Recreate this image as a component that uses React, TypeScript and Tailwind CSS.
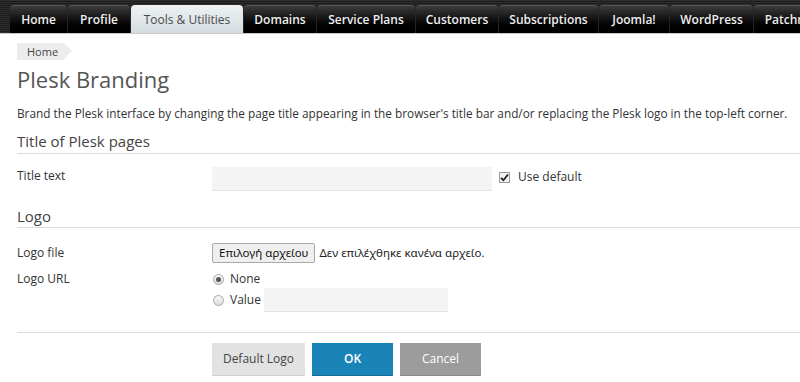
import React from "react"

const tabs = [
  { label: "Home", w: "w-[57px]" },
  { label: "Profile", w: "w-[62px]" },
  { label: "Tools & Utilities", w: "w-[112px]", active: true },
  { label: "Domains", w: "w-[72px]" },
  { label: "Service Plans", w: "w-[98px]" },
  { label: "Customers", w: "w-[82px]" },
  { label: "Subscriptions", w: "w-[99px]" },
  { label: "Joomla!", w: "w-[70px]" },
  { label: "WordPress", w: "w-[83px]" },
  { label: "Patchman", w: "w-[80px]" },
]

function TabBar() {
  return (
    <div className="h-[34px] bg-[repeating-linear-gradient(180deg,#2e2e2e_0px,#2e2e2e_1px,#1c1c1c_1px,#1c1c1c_2px)] border-b border-[#c8c8c8] pl-[10px] pt-[5px] flex gap-px overflow-hidden">
      {tabs.map((t) =>
        t.active ? (
          <div
            key={t.label}
            className={`${t.w} shrink-0 h-[29px] rounded-t-[4px] bg-gradient-to-b from-[#eef2f4] to-[#d3dbdf] flex items-center justify-center text-[12px] text-[#4a4a4a]`}
          >
            {t.label}
          </div>
        ) : (
          <div
            key={t.label}
            className={`${t.w} shrink-0 h-[28px] rounded-t-[4px] bg-gradient-to-b from-[#3c3c3c] via-[#111] to-[#000] border-t border-[#555] flex items-center justify-center text-[12px] font-semibold text-[#f0f0f0] [text-shadow:0_1px_1px_#000]`}
          >
            {t.label}
          </div>
        )
      )}
    </div>
  )
}

function Radio({ checked }: { checked?: boolean }) {
  return (
    <span className="w-[11px] h-[11px] rounded-full border border-[#a8a8a8] bg-gradient-to-b from-[#fafafa] to-[#dcdcdc] flex items-center justify-center shrink-0">
      {checked && <span className="w-[5px] h-[5px] rounded-full bg-[#555]" />}
    </span>
  )
}

export default function App() {
  return (
    <div className="w-[800px] h-[382px] bg-white overflow-hidden [font-family:'Open_Sans',sans-serif]">
      <TabBar />

      <div className="pl-[17px]">
        {/* Breadcrumb */}
        <div className="mt-[9px] flex">
          <div className="relative h-[17px] bg-[#ececec] pl-[10px] pr-[6px] text-[11px] leading-[17px] text-[#444]">
            Home
            <span className="absolute right-[-8px] top-0 w-0 h-0 border-y-[8.5px] border-y-transparent border-l-[8px] border-l-[#ececec]" />
          </div>
        </div>

        <h1 className="mt-[5px] text-[22px] leading-[28px] text-[#555] font-normal">Plesk Branding</h1>

        <p className="mt-[12px] text-[11.8px] leading-[16px] text-[#333] whitespace-nowrap">
          Brand the Plesk interface by changing the page title appearing in the browser's title bar and/or replacing the Plesk logo in the top-left corner.
        </p>

        {/* Title section */}
        <div className="mt-[10px] border-b border-[#dcdcdc] pb-[2px] text-[15px] leading-[20px] text-[#444]">
          Title of Plesk pages
        </div>

        <div className="mt-[13px] flex">
          <div className="w-[195px] shrink-0 pt-[1px] text-[12px] leading-[16px] text-[#333]">Title text</div>
          <div className="flex items-center">
            <div className="w-[280px] h-[24px] bg-[#f4f4f4] border-b border-[#e4e4e4]" />
            <span className="ml-[7px] -mt-[4px] w-[11px] h-[11px] border border-[#9a9a9a] bg-[#f2f2f2] flex items-center justify-center">
              <svg width="9" height="9" viewBox="0 0 9 9">
                <path d="M1 4.8 L3.4 7.2 L8 1.5" stroke="#222" strokeWidth="1.8" fill="none" />
              </svg>
            </span>
            <span className="ml-[8px] -mt-[4px] text-[12px] text-[#333]">Use default</span>
          </div>
        </div>

        {/* Logo section */}
        <div className="mt-[15px] border-b border-[#dcdcdc] pb-[1px] text-[15px] leading-[20px] text-[#444]">
          Logo
        </div>

        <div className="mt-[15px] flex items-center">
          <div className="w-[195px] shrink-0 text-[12px] leading-[16px] text-[#333]">Logo file</div>
          <div className="flex items-center [font-family:'Noto_Sans',sans-serif]">
            <span className="h-[20px] px-[6px] border border-[#a9a9a9] rounded-[2px] bg-[#efefef] text-[11.5px] leading-[18px] text-[#111]">
              Επιλογή αρχείου
            </span>
            <span className="ml-[4px] text-[11.5px] text-[#222]">Δεν επιλέχθηκε κανένα αρχείο.</span>
          </div>
        </div>

        <div className="mt-[7px] flex">
          <div className="w-[195px] shrink-0 text-[12px] leading-[16px] text-[#333] pt-[1px]">Logo URL</div>
          <div className="flex flex-col">
            <div className="flex items-center h-[18px] pl-[1px]">
              <Radio checked />
              <span className="ml-[6px] text-[12px] text-[#333]">None</span>
            </div>
            <div className="flex items-center pl-[1px]">
              <Radio />
              <span className="ml-[6px] text-[12px] text-[#333]">Value</span>
              <div className="ml-[3px] w-[184px] h-[24px] bg-[#f4f4f4] border-b border-[#e4e4e4]" />
            </div>
          </div>
        </div>

        <div className="mt-[20px] border-t border-[#dcdcdc]" />

        {/* Buttons */}
        <div className="mt-[10px] pl-[195px] flex gap-[7px]">
          <button className="w-[93px] h-[33px] bg-[#e2e2e2] border-b border-[#cfcfcf] text-[12px] text-[#444]">Default Logo</button>
          <button className="w-[81px] h-[33px] bg-[#1a84b8] border-b border-[#156b96] text-[12px] font-semibold text-white">OK</button>
          <button className="w-[81px] h-[33px] bg-[#9c9c9c] border-b border-[#888] text-[12px] text-white">Cancel</button>
        </div>
      </div>
    </div>
  )
}
